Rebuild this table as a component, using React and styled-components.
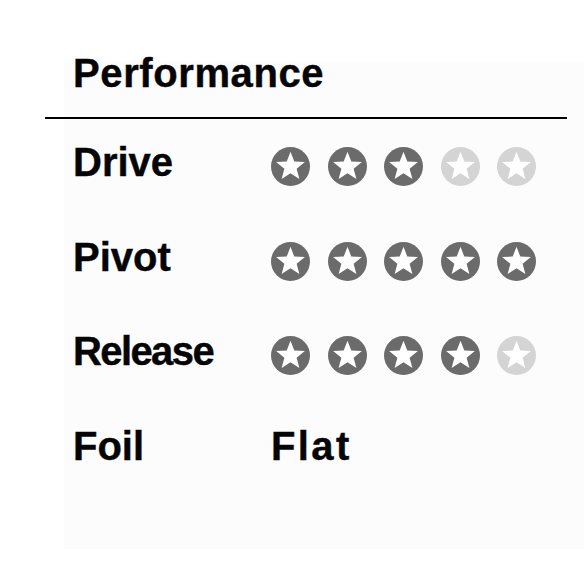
import React from 'react'
import styled, { createGlobalStyle } from 'styled-components'

const GlobalStyle = createGlobalStyle`
  html, body {
    margin: 0;
    padding: 0;
    background: #ffffff;
  }
  body {
    font-family: 'Liberation Sans', Arial, Helvetica, sans-serif;
    color: #050505;
  }
`

const Page = styled.div`
  position: relative;
  width: 584px;
  height: 584px;
  box-sizing: border-box;
  padding: 53px 0 0 73px;
  overflow: hidden;
  // faint sheet behind the card, visible in the scan
  &::before {
    content: '';
    position: absolute;
    left: 64px;
    top: 62px;
    right: 0;
    bottom: 35px;
    background: #fcfcfc;
  }
`

const Card = styled.div`
  position: relative;
`

const Title = styled.h2`
  margin: 0;
  font-size: 40px;
  line-height: 40px;
  font-weight: 700;
  letter-spacing: 0.6px;
  -webkit-text-stroke: 0.4px currentColor;
`

const Rule = styled.hr`
  margin: 24px 0 0 -28px;
  width: 522px;
  height: 2px;
  border: 0;
  background: #000;
`

const Rows = styled.div`
  margin-top: 23px;
  display: grid;
  grid-template-columns: 198px auto;
  grid-auto-rows: 94.5px;
  align-items: start;
`

const Label = styled.div`
  font-size: 40px;
  line-height: 40px;
  font-weight: 700;
  -webkit-text-stroke: 0.4px currentColor;
  letter-spacing: ${(p) => p.$tight ? '-1.6px' : '0'};
`

const Value = styled(Label)`
  letter-spacing: 2.4px;
`

const Stars = styled.div`
  display: flex;
  gap: 17.5px;
  margin-top: 5px;
`

const StarIcon = styled.svg`
  display: block;
  width: 39px;
  height: 39px;
`

const STAR =
  '20,4.8 23.88,14.96 34.74,15.51 26.28,22.34 29.11,32.84 20,26.9 10.89,32.84 13.72,22.34 5.26,15.51 16.12,14.96'

function Star({ on }) {
  return (
    <StarIcon viewBox="0 0 40 40">
      <circle cx="20" cy="20" r="20" fill={on ? '#6b6b6b' : '#d4d4d4'} />
      <polygon points={STAR} fill="#ffffff" />
    </StarIcon>
  )
}

function Rating({ value }) {
  return (
    <Stars>
      {[0, 1, 2, 3, 4].map((i) => (
        <Star key={i} on={i < value} />
      ))}
    </Stars>
  )
}

const ratings = [
  { name: 'Drive', value: 3 },
  { name: 'Pivot', value: 5 },
  { name: 'Release', value: 4, tight: true },
]

export default function App() {
  return (
    <>
      <GlobalStyle />
      <Page>
        <Card>
          <Title>Performance</Title>
          <Rule />
          <Rows>
            {ratings.map((r) => (
              <React.Fragment key={r.name}>
                <Label $tight={r.tight}>{r.name}</Label>
                <Rating value={r.value} />
              </React.Fragment>
            ))}
            <Label>Foil</Label>
            <Value>Flat</Value>
          </Rows>
        </Card>
      </Page>
    </>
  )
}
